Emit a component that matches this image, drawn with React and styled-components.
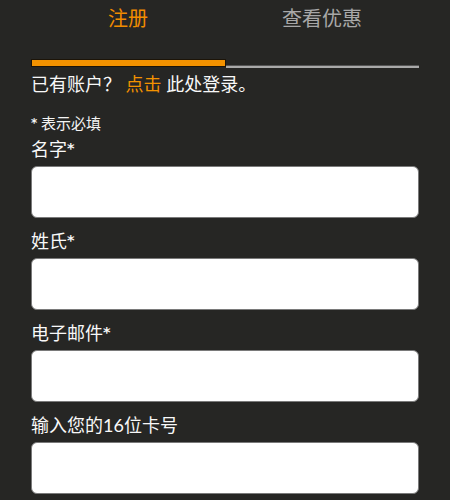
import React from "react";
import styled, { createGlobalStyle } from "styled-components";

const Global = createGlobalStyle`
  html, body { margin: 0; padding: 0; background: #262624; }
  body { font-family: Lato, "Noto Sans CJK SC", sans-serif; color: #f4f4f4; }
`;

const Page = styled.div`
  width: 450px;
  min-height: 500px;
  box-sizing: border-box;
  padding: 0 31px;
  background: #262624;
`;

const Tabs = styled.div`
  display: flex;
  height: 58px;
`;

const Tab = styled.div`
  flex: 1;
  text-align: center;
  font-size: 20px;
  line-height: 37px;
  color: ${(p) => (p.$active ? "#f08c00" : "#a8a8a8")};
`;

const Progress = styled.div`
  display: flex;
  align-items: flex-end;
  height: 9px;
`;

const Fill = styled.div`
  width: 195px;
  height: 8px;
  box-sizing: border-box;
  background: #f39200;
  border: 1px solid #1c1408;
`;

const Track = styled.div`
  flex: 1;
  height: 2px;
  margin-bottom: -1px;
  background: #a9a9a9;
  border-top: 1px solid #555;
`;

const Login = styled.p`
  margin: 6px 0 0;
  font-size: 18px;
  line-height: 22px;
  color: #f8f8f8;
`;

const Link = styled.a`
  color: #f39200;
  text-decoration: none;
`;

const Note = styled.p`
  margin: 19px 0 0;
  height: 18px;
  font-size: 15px;
  line-height: 18px;
  color: #f4f4f4;
`;

const Star = styled.span`
  font-family: "DejaVu Sans", sans-serif;
  font-weight: 700;
  font-size: 0.8em;
  line-height: 0;
  vertical-align: 0.2em;
`;

const Field = styled.div`
  display: flex;
  flex-direction: column;
  margin-top: ${(p) => p.$top}px;
`;

const Label = styled.label`
  height: 22px;
  font-size: 18px;
  line-height: 22px;
  margin-bottom: 6px;
  color: #f8f8f8;
`;

const Input = styled.input`
  height: 52px;
  box-sizing: border-box;
  border: 1px solid #7a7a7a;
  border-radius: 6px;
  background: #fff;
  outline: none;
  font-size: 16px;
  padding: 0 10px;
`;

const fields = [
  { label: "名字", req: true, top: 6 },
  { label: "姓氏", req: true, top: 12 },
  { label: "电子邮件", req: true, top: 12 },
  { label: "输入您的16位卡号", req: false, top: 12 },
];

export default function App() {
  return (
    <>
      <Global />
      <Page>
        <Tabs>
          <Tab $active>注册</Tab>
          <Tab>查看优惠</Tab>
        </Tabs>
        <Progress>
          <Fill />
          <Track />
        </Progress>
        <Login>
          已有账户？ <Link href="#">点击</Link> 此处登录。
        </Login>
        <Note>
          <Star>*</Star> 表示必填
        </Note>
        {fields.map((f) => (
          <Field key={f.label} $top={f.top}>
            <Label>
              {f.label}
              {f.req && <Star>*</Star>}
            </Label>
            <Input type="text" />
          </Field>
        ))}
      </Page>
    </>
  );
}
